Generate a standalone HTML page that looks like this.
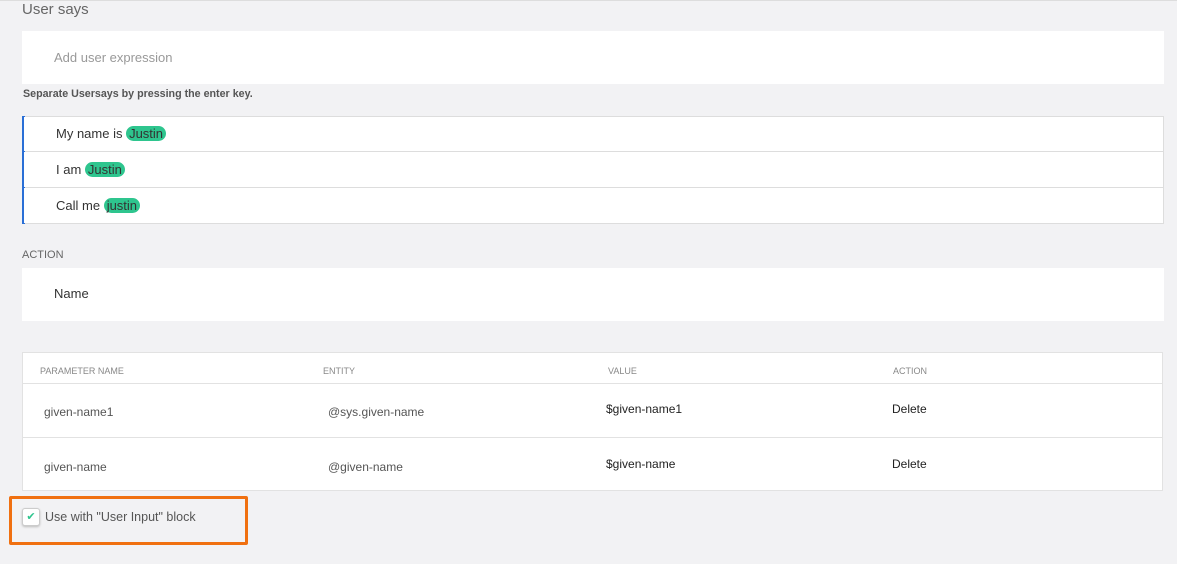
<!DOCTYPE html>
<html><head><style>
body{margin:0;width:1177px;height:564px;background:#f2f2f4;font-family:"Liberation Sans",sans-serif;position:relative;overflow:hidden;color:#333}
.a{position:absolute}
.box{background:#fff}
.tag{background:#2ec58e;border-radius:8px;padding:0 3px;color:#333}
.row{position:absolute;left:24px;width:1139px;height:35px;background:#fff;font-size:13px;line-height:35px;color:#333}
.row span.t{position:absolute;left:32px}
.th{position:absolute;top:366px;font-size:9px;color:#888}
.td{position:absolute;font-size:12px;color:#555}
.td2{position:absolute;font-size:12px;color:#222}
</style></head><body>
<div class="a" style="left:0;top:0;width:1177px;height:1px;background:#ddd"></div>
<div class="a" style="left:22px;top:1px;font-size:15px;color:#666">User says</div>
<div class="a box" style="left:22px;top:31px;width:1142px;height:53px"></div>
<div class="a" style="left:54px;top:50px;font-size:13px;color:#999">Add user expression</div>
<div class="a" style="left:23px;top:88px;font-size:10.7px;font-weight:bold;color:#555">Separate Usersays by pressing the enter key.</div>
<div class="a" style="left:22px;top:116px;width:1142px;height:108px;background:#ddd"></div>
<div class="a" style="left:22px;top:116px;width:3px;height:108px;background:#2a6fd6"></div>
<div class="row" style="top:117px;line-height:33px;height:34px"><span class="t">My name is <span class="tag">Justin</span></span></div>
<div class="row" style="top:152px;height:35px"><span class="t">I am <span class="tag">Justin</span></span></div>
<div class="row" style="top:188px;height:35px"><span class="t">Call me <span class="tag">justin</span></span></div>
<div class="a" style="left:22px;top:249px;font-size:11px;color:#666">ACTION</div>
<div class="a box" style="left:22px;top:268px;width:1142px;height:53px"></div>
<div class="a" style="left:54px;top:286px;font-size:13px;color:#333">Name</div>
<div class="a box" style="left:22px;top:352px;width:1141px;height:139px;border:1px solid #e2e2e2;box-sizing:border-box"></div>
<div class="a" style="left:23px;top:383px;width:1140px;height:1px;background:#e2e2e2"></div>
<div class="a" style="left:23px;top:437px;width:1140px;height:1px;background:#e2e2e2"></div>
<div class="th" style="left:40px">PARAMETER NAME</div>
<div class="th" style="left:323px">ENTITY</div>
<div class="th" style="left:608px">VALUE</div>
<div class="th" style="left:893px">ACTION</div>
<div class="td" style="left:44px;top:405px">given-name1</div>
<div class="td" style="left:328px;top:405px">@sys.given-name</div>
<div class="td2" style="left:606px;top:402px">$given-name1</div>
<div class="td2" style="left:892px;top:402px">Delete</div>
<div class="td" style="left:44px;top:460px">given-name</div>
<div class="td" style="left:328px;top:460px">@given-name</div>
<div class="td2" style="left:606px;top:457px">$given-name</div>
<div class="td2" style="left:892px;top:457px">Delete</div>
<div class="a" style="left:9px;top:496px;width:239px;height:49px;border:3px solid #f07010;box-sizing:border-box;border-radius:2px"></div>
<div class="a" style="left:22px;top:508px;width:18px;height:18px;background:#fff;border:1px solid #ccc;border-radius:3px;box-sizing:border-box;box-shadow:0 1px 2px #bbb;color:#2ec58e;font-size:11px;line-height:16px;text-align:center">✔</div>
<div class="a" style="left:45px;top:510px;font-size:12.5px;color:#555">Use with "User Input" block</div>
</body></html>
